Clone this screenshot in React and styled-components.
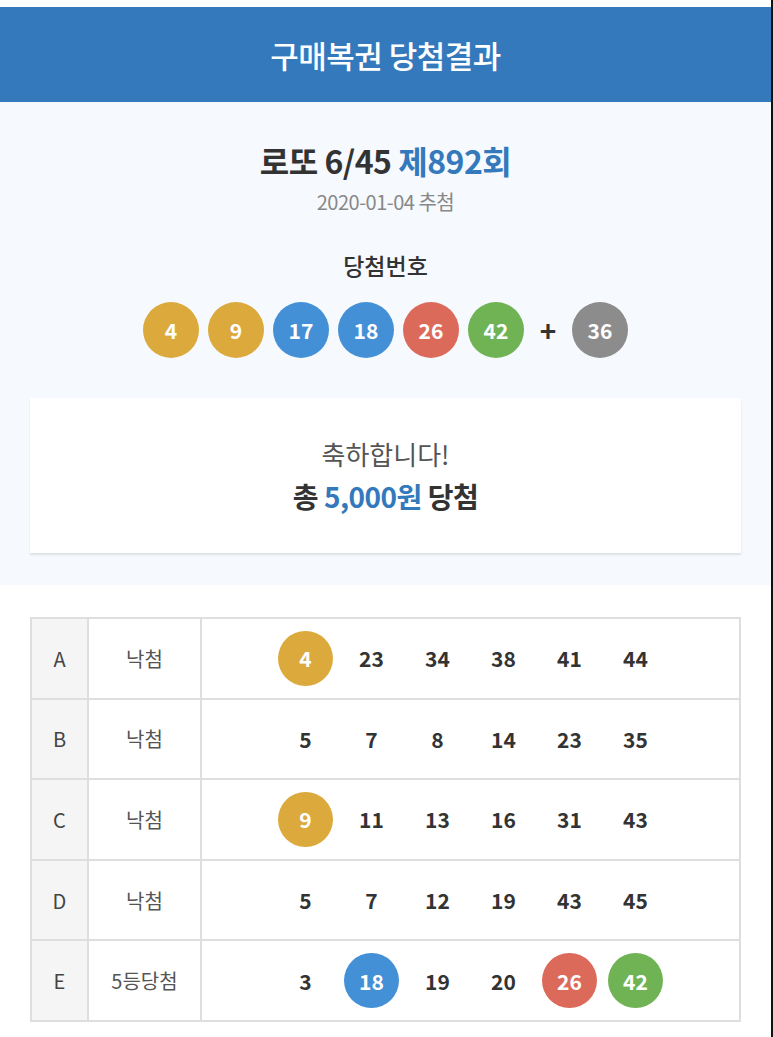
import styled, { createGlobalStyle } from 'styled-components';

const GlobalStyle = createGlobalStyle`
    * { box-sizing: border-box; }
    body {
        margin: 0;
        background: #fff;
        font-family: 'Noto Sans CJK KR', 'Noto Sans', sans-serif;
    }
`

const COLORS = {
    yellow: '#dcaa3c',
    blue: '#4490d6',
    red: '#dc6a5b',
    green: '#6fb355',
    gray: '#8c8c8c',
}

const ballColor = (n) => {
    if (n <= 10) return COLORS.yellow;
    if (n <= 20) return COLORS.blue;
    if (n <= 30) return COLORS.red;
    if (n <= 40) return COLORS.gray;
    return COLORS.green;
}

const winning = [4, 9, 17, 18, 26, 42];
const bonus = 36;

const games = [
    { label: 'A', result: '낙첨', nums: [4, 23, 34, 38, 41, 44] },
    { label: 'B', result: '낙첨', nums: [5, 7, 8, 14, 23, 35] },
    { label: 'C', result: '낙첨', nums: [9, 11, 13, 16, 31, 43] },
    { label: 'D', result: '낙첨', nums: [5, 7, 12, 19, 43, 45] },
    { label: 'E', result: '5등당첨', nums: [3, 18, 19, 20, 26, 42] },
]

export default function App() {
    return (
        <Page>
            <GlobalStyle />
            <Header>구매복권 당첨결과</Header>
            <Hero>
                <Title>로또 6/45 <Round>제892회</Round></Title>
                <DrawDate>2020-01-04 추첨</DrawDate>
                <SubTitle>당첨번호</SubTitle>
                <BallRow>
                    {winning.map((n) => (
                        <Ball key={n} color={ballColor(n)}>{n}</Ball>
                    ))}
                    <Plus>+</Plus>
                    <Ball color={COLORS.gray}>{bonus}</Ball>
                </BallRow>
                <Card>
                    <Congrats>축하합니다!</Congrats>
                    <Prize>총 <Amount>5,000원</Amount> 당첨</Prize>
                </Card>
            </Hero>
            <Table>
                {games.map((g) => (
                    <Row key={g.label}>
                        <LabelCell>{g.label}</LabelCell>
                        <ResultCell>{g.result}</ResultCell>
                        <NumCell>
                            {g.nums.map((n) => (
                                winning.includes(n)
                                    ? <TableBall key={n} color={ballColor(n)}>{n}</TableBall>
                                    : <PlainNum key={n}>{n}</PlainNum>
                            ))}
                        </NumCell>
                    </Row>
                ))}
            </Table>
        </Page>
    )
};

const Page = styled.div`
    width: 773px;
    min-height: 1037px;
    padding-top: 7px;
    border-right: 2px solid #111;
    padding-bottom: 17px;
`
const Header = styled.header`
    height: 95px;
    background-color: #3479bc;
    color: #fff;
    font-size: 31px;
    font-weight: 500;
    display: flex;
    align-items: center;
    justify-content: center;
    letter-spacing: -0.5px;
`
const Hero = styled.section`
    background-color: #f6f9fd;
    padding: 38px 30px 32px;
    display: flex;
    flex-direction: column;
    align-items: center;
`
const Title = styled.h1`
    margin: 0;
    font-size: 32px;
    line-height: 40px;
    font-weight: 700;
    color: #333;
    letter-spacing: -0.5px;
`
const Round = styled.span`
    color: #3479bc;
`
const DrawDate = styled.p`
    margin: 10px 0 0;
    font-size: 20px;
    line-height: 24px;
    color: #888;
    letter-spacing: -0.5px;
`
const SubTitle = styled.h2`
    margin: 36px 0 0;
    font-size: 23px;
    line-height: 30px;
    font-weight: 500;
    color: #333;
`
const BallRow = styled.div`
    margin-top: 22px;
    display: flex;
    align-items: center;
    gap: 9px;
`
const Ball = styled.span`
    width: 56px;
    height: 56px;
    border-radius: 50%;
    background-color: ${(p) => p.color};
    color: #fff;
    font-size: 21px;
    font-weight: 700;
    display: flex;
    align-items: center;
    justify-content: center;
`
const Plus = styled.span`
    width: 30px;
    text-align: center;
    font-size: 28px;
    font-weight: 700;
    color: #333;
`
const Card = styled.div`
    align-self: stretch;
    margin-top: 40px;
    height: 155px;
    background-color: #fff;
    box-shadow: 0 2px 2px rgba(0, 0, 0, 0.1);
    display: flex;
    flex-direction: column;
    align-items: center;
    justify-content: center;
    gap: 9px;
`
const Congrats = styled.p`
    margin: 0;
    font-size: 26px;
    line-height: 32px;
    color: #555;
`
const Prize = styled.p`
    margin: 0;
    font-size: 28px;
    line-height: 34px;
    font-weight: 700;
    color: #333;
    letter-spacing: -0.5px;
`
const Amount = styled.span`
    color: #3479bc;
`
const Table = styled.div`
    margin: 32px 30px 0;
    border: 2px solid #dedede;
    border-bottom: none;
`
const Row = styled.div`
    display: grid;
    grid-template-columns: 57px 113px 1fr;
    height: 80.6px;
    border-bottom: 2px solid #dedede;
`
const LabelCell = styled.div`
    background-color: #f5f5f5;
    border-right: 2px solid #dedede;
    display: flex;
    align-items: center;
    justify-content: center;
    font-size: 20px;
    color: #444;
`
const ResultCell = styled.div`
    border-right: 2px solid #dedede;
    display: flex;
    align-items: center;
    justify-content: center;
    font-size: 20px;
    color: #555;
`
const NumCell = styled.div`
    display: flex;
    align-items: center;
    justify-content: center;
    gap: 11px;
`
const PlainNum = styled.span`
    width: 55px;
    text-align: center;
    font-size: 21px;
    font-weight: 700;
    color: #333;
`
const TableBall = styled(Ball)`
    width: 55px;
    height: 55px;
`
